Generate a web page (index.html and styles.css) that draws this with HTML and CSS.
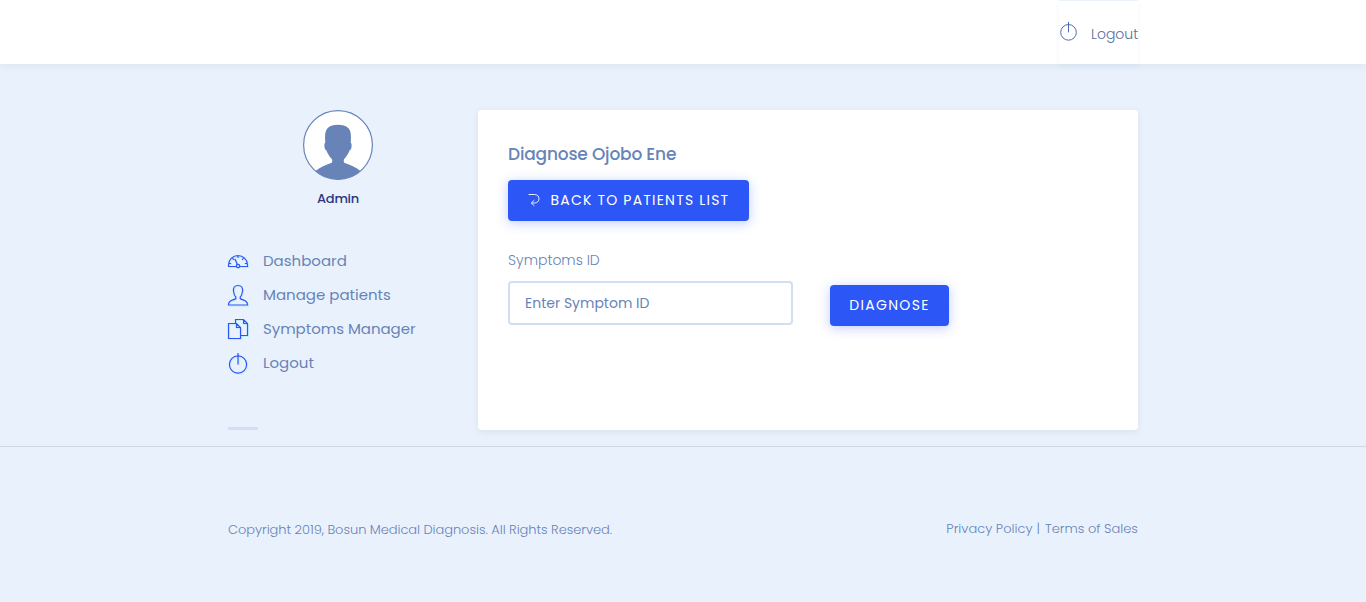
FILE: index.html
```html
<!DOCTYPE html>
<html lang="en">
<head>
<meta charset="utf-8">
<title>Diagnose</title>
<link rel="stylesheet" href="styles.css">
</head>
<body>
<svg class="sprite" aria-hidden="true">
  <symbol id="power" viewBox="0 0 20 22"><circle cx="10" cy="12.5" r="8.6"/><path d="M10 1V12.500"/></symbol>
</svg>
<header class="topbar">
  <div class="container topbar-inner">
    <a class="topbar-logout"><svg class="power-small"><use href="#power"/></svg><span>Logout</span></a>
  </div>
</header>
<main class="container main">
  <aside class="sidebar">
    <div class="profile">
      <svg class="avatar" viewBox="0 0 70 70">
        <circle cx="35" cy="35" r="34.4" fill="#fff"/>
        <path class="person" d="M12.500 61C17 57.500 22 55 27.500 53.300C29.500 52.500 29.600 50.800 28.800 49C26.300 46.500 24.500 43.500 23.300 40.300C21.300 40 20.700 33.500 22.300 32.500C21.700 26 22 21 24.500 18.200C27 15.500 31 14.800 35 14.800S43 15.500 45.500 18.200C48 21 48.300 26 47.700 32.500C49.300 33.500 48.700 40 46.700 40.300C45.500 43.500 43.700 46.500 41.200 49C40.400 50.800 40.500 52.500 42.500 53.300C48 55 53 57.500 57.500 61A34.400 34.400 0 0 1 12.500 61Z"/>
        <circle class="ring" cx="35" cy="35" r="34.4"/>
      </svg>
      <div class="profile-name">Admin</div>
    </div>
    <nav class="menu">
      <a class="menu-item"><svg class="icon" viewBox="0 0 22 22"><path d="M9 16.500H1.500V15C1.500 9.500 6 5.500 11 5.500s9.500 4 9.500 9.500v1.500H13M5.500 8l1.500 2M11 5.500V8M16.500 8l-1.500 2M1.700 13.500h2.500M17.800 13.500h2.500M8 9l2.300 5.500"/><circle cx="11" cy="16" r="1.700"/></svg><span>Dashboard</span></a>
      <a class="menu-item"><svg class="icon" viewBox="0 0 22 22"><path d="M8.800 13C7.500 11.800 6.800 9.500 6.500 7.500C6 3.500 7.500 1.500 11 1.500s5 2 4.500 6C15.200 9.500 14.500 11.800 13.200 13V14.500C14.500 16 20.500 16 20.500 20.500v.500H1.500V20.500C1.500 16 7.500 16 8.800 14.500Z"/></svg><span>Manage patients</span></a>
      <a class="menu-item"><svg class="icon" viewBox="0 0 22 22"><path d="M1.500 5.500H9.500L13.500 9.500V20.500H1.500ZM9.500 5.500V9.500H13.500M8.500 5V1.500H16.500L20.500 5.500V17.500H14M16.500 1.500V5.500H20.500"/></svg><span class="symptoms">Symptoms Manager</span></a>
      <a class="menu-item"><svg class="icon"><use href="#power"/></svg><span>Logout</span></a>
    </nav>
    <div class="rule"></div>
  </aside>
  <section class="card">
    <h1 class="title"><span>Diagnose Ojobo Ene</span></h1>
    <a class="button button-back"><svg class="return" viewBox="0 0 14 14"><path d="M1.500 1.500H7.500C10.500 1.500 12 3.500 12 5.700S10.500 10 7.500 10H4.500M7.300 7.200L4.300 10L7.300 12.800"/></svg><span>BACK TO PATIENTS LIST</span></a>
    <form class="form">
      <div class="field">
        <label class="label" for="symptom"><span>Symptoms ID</span></label>
        <input class="input" id="symptom" placeholder="Enter Symptom ID">
      </div>
      <button class="button button-diagnose" type="button"><span>DIAGNOSE</span></button>
    </form>
  </section>
</main>
<footer class="footer">
  <div class="container footer-inner">
    <span class="copyright">Copyright 2019, Bosun Medical Diagnosis. All Rights Reserved.</span>
    <span class="links"><a>Privacy Policy</a><span class="bar">|</span><a>Terms of Sales</a></span>
  </div>
</footer>
</body>
</html>
```
FILE: styles.css
```css
* { box-sizing: border-box; }
body {
  margin: 0;
  height: 602px;
  overflow: hidden;
  background: #e9f2fc;
  color: #6783b8;
  font-family: Poppins, Inter, "Open Sans", sans-serif;
  font-weight: 300;
}
svg { fill: none; flex: none; }
.sprite { position: absolute; width: 0; height: 0; }
.container { width: 910px; margin: 0 auto; }
.topbar {
  height: 64px;
  background: #fff;
  box-shadow: 0 2px 8px rgba(100, 130, 170, .1);
}
.topbar-inner { display: flex; justify-content: flex-end; }
.topbar-logout {
  display: flex;
  align-items: center;
  width: 79px;
  height: 64px;
  padding-top: 4px;
  font-size: 14px;
  white-space: nowrap;
  color: #5a6f9c;
  border-top: 1px solid #edf3fa;
  box-shadow: 0 2px 5px rgba(100, 130, 170, .08);
}
.power-small {
  width: 19px;
  height: 20px;
  margin: -7px 13px 0 0;
  stroke: #4f6cab;
  stroke-width: 1.1;
}
.main { display: flex; padding-top: 46px; height: 382px; }
.sidebar { width: 250px; }
.profile { width: 220px; text-align: center; height: 134px; }
.avatar { display: block; width: 70px; height: 70px; margin: 0 auto; }
.person { fill: #6783b8; }
.ring { stroke: #6783b8; stroke-width: 1.2; }
.profile-name {
  margin-top: 8px;
  line-height: 21px;
  font-size: 13px;
  font-weight: 500;
  letter-spacing: -.3px;
  color: #2c3782;
}
.menu-item {
  display: flex;
  align-items: center;
  height: 34px;
  font-size: 15px;
  font-weight: 400;
  white-space: nowrap;
}
.menu-item span { margin-top: -2px; }
.symptoms { letter-spacing: -.03px; }
.icon {
  width: 22px;
  height: 22px;
  margin: 0 14px 0 -1px;
  stroke: #2c56f5;
  stroke-width: 1.2;
  filter: drop-shadow(1px 1px 0 #c3ebff);
}
.rule { width: 30px; height: 3px; margin-top: 47px; border-radius: 1px; background: #d2dff2; }
.card {
  width: 660px;
  height: 320px;
  padding: 30px;
  border-radius: 4px;
  background: #fff;
  box-shadow: 0 2px 6px rgba(100, 130, 170, .13);
}
.title { margin: 0 0 12px; line-height: 28px; font-size: 17px; font-weight: 500; letter-spacing: -.17px; white-space: nowrap; }
.button {
  display: flex;
  align-items: center;
  justify-content: center;
  height: 41px;
  padding: 0;
  border: 0;
  border-radius: 4px;
  background: #2c56f5;
  box-shadow: 0 2px 12px rgba(44, 86, 248, .3);
  color: #fff;
  font-family: inherit;
  font-size: 14px;
  font-weight: 400;
  letter-spacing: 1.2px;
  white-space: nowrap;
}
.button-back { width: 241px; justify-content: flex-start; padding-left: 19px; }
.return { width: 14px; height: 14px; margin: -2px 9.5px 0 0; stroke: #fff; stroke-width: .9; }
.form { display: flex; margin-top: 28px; }
.field { width: 285px; margin-right: 37px; }
.label { display: block; height: 32px; line-height: 22px; font-size: 14px; white-space: nowrap; }
.input {
  display: block;
  width: 285px;
  height: 44px;
  padding: 0 15px;
  border: 2px solid #d2dff2;
  border-radius: 4px;
  background: #fff;
  font-family: inherit;
  font-size: 14px;
  font-weight: 400;
}
.input::placeholder { color: #6783b8; opacity: 1; }
.button-diagnose { width: 119px; margin-top: 36px; letter-spacing: 1.3px; }
.footer { height: 156px; border-top: 1px solid #cdd8e5; }
.footer-inner {
  display: flex;
  justify-content: space-between;
  padding-top: 73px;
  line-height: 20px;
  font-size: 13px;
  white-space: nowrap;
}
.copyright { letter-spacing: -.055px; }
.links { margin-top: -1px; }
.bar { margin: 0 5px 0 4px; }
```
